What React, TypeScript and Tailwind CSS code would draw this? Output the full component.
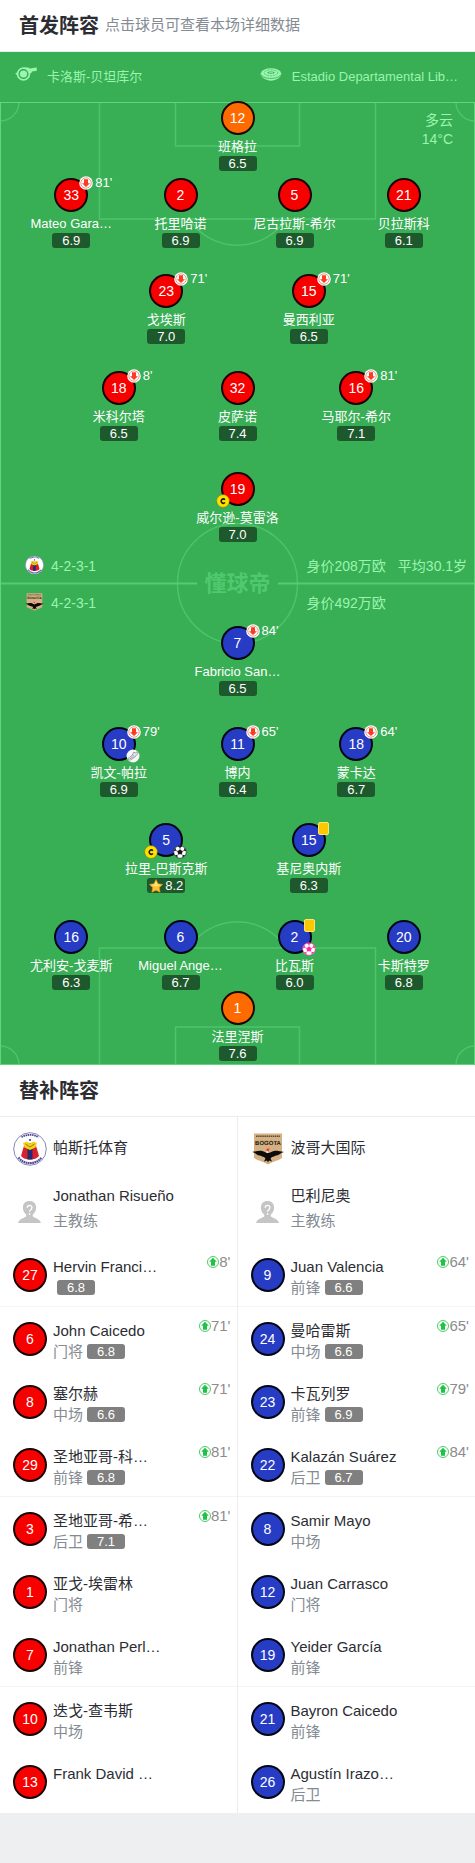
import { clsx } from "clsx";

type Badge = "captain" | "goal" | "assist" | "ownGoal" | "yellow";

interface Player {
  number: number;
  name: string;
  rating: string;
  x: number;
  y: number;
  color: "red" | "blue" | "orange";
  off?: string;
  badges?: Badge[];
  best?: boolean;
}

interface Substitute {
  number: number;
  name: string;
  position?: string;
  rating?: string;
  on?: string;
}

// x and y are percentages of the pitch
const starters: Player[] = [
  { number: 12, name: "班格拉", rating: "6.5", x: 50, y: -0.1, color: "orange" },
  { number: 33, name: "Mateo Gara…", rating: "6.9", x: 15, y: 7.9, color: "red", off: "81'" },
  { number: 2, name: "托里哈诺", rating: "6.9", x: 38, y: 7.9, color: "red" },
  { number: 5, name: "尼古拉斯-希尔", rating: "6.9", x: 62, y: 7.9, color: "red" },
  { number: 21, name: "贝拉斯科", rating: "6.1", x: 85, y: 7.9, color: "red" },
  { number: 23, name: "戈埃斯", rating: "7.0", x: 35, y: 17.9, color: "red", off: "71'" },
  { number: 15, name: "曼西利亚", rating: "6.5", x: 65, y: 17.9, color: "red", off: "71'" },
  { number: 18, name: "米科尔塔", rating: "6.5", x: 25, y: 27.9, color: "red", off: "8'" },
  { number: 32, name: "皮萨诺", rating: "7.4", x: 50, y: 27.9, color: "red" },
  { number: 16, name: "马耶尔-希尔", rating: "7.1", x: 75, y: 27.9, color: "red", off: "81'" },
  { number: 19, name: "威尔逊-莫雷洛", rating: "7.0", x: 50, y: 38.4, color: "red", badges: ["captain"] },
  { number: 7, name: "Fabricio San…", rating: "6.5", x: 50, y: 54.4, color: "blue", off: "84'" },
  { number: 10, name: "凯文-帕拉", rating: "6.9", x: 25, y: 64.9, color: "blue", off: "79'", badges: ["assist"] },
  { number: 11, name: "博内", rating: "6.4", x: 50, y: 64.9, color: "blue", off: "65'" },
  { number: 18, name: "蒙卡达", rating: "6.7", x: 75, y: 64.9, color: "blue", off: "64'" },
  { number: 5, name: "拉里-巴斯克斯", rating: "8.2", x: 35, y: 74.9, color: "blue", badges: ["captain", "goal"], best: true },
  { number: 15, name: "基尼奥内斯", rating: "6.3", x: 65, y: 74.9, color: "blue", badges: ["yellow"] },
  { number: 16, name: "尤利安-戈麦斯", rating: "6.3", x: 15, y: 84.9, color: "blue" },
  { number: 6, name: "Miguel Ange…", rating: "6.7", x: 38, y: 84.9, color: "blue" },
  { number: 2, name: "比瓦斯", rating: "6.0", x: 62, y: 84.9, color: "blue", badges: ["yellow", "ownGoal"] },
  { number: 20, name: "卡斯特罗", rating: "6.8", x: 85, y: 84.9, color: "blue" },
  { number: 1, name: "法里涅斯", rating: "7.6", x: 50, y: 92.3, color: "orange" },
];

const homeSubs: Substitute[] = [
  { number: 27, name: "Hervin Franci…", rating: "6.8", on: "8'" },
  { number: 6, name: "John Caicedo", position: "门将", rating: "6.8", on: "71'" },
  { number: 8, name: "塞尔赫", position: "中场", rating: "6.6", on: "71'" },
  { number: 29, name: "圣地亚哥-科…", position: "前锋", rating: "6.8", on: "81'" },
  { number: 3, name: "圣地亚哥-希…", position: "后卫", rating: "7.1", on: "81'" },
  { number: 1, name: "亚戈-埃雷林", position: "门将" },
  { number: 7, name: "Jonathan Perl…", position: "前锋" },
  { number: 10, name: "迭戈-查韦斯", position: "中场" },
  { number: 13, name: "Frank David …" },
];

const awaySubs: Substitute[] = [
  { number: 9, name: "Juan Valencia", position: "前锋", rating: "6.6", on: "64'" },
  { number: 24, name: "曼哈雷斯", position: "中场", rating: "6.6", on: "65'" },
  { number: 23, name: "卡瓦列罗", position: "前锋", rating: "6.9", on: "79'" },
  { number: 22, name: "Kalazán Suárez", position: "后卫", rating: "6.7", on: "84'" },
  { number: 8, name: "Samir Mayo", position: "中场" },
  { number: 12, name: "Juan Carrasco", position: "门将" },
  { number: 19, name: "Yeider García", position: "前锋" },
  { number: 21, name: "Bayron Caicedo", position: "前锋" },
  { number: 26, name: "Agustín Irazo…", position: "后卫" },
];

const shirtColors = {
  red: "bg-[#f70000]",
  blue: "bg-[#263cc4]",
  orange: "bg-[#ff6a00]",
};

function WhistleIcon() {
  return (
    <svg viewBox="0 0 22 14" className="mb-[6px] h-[14px] w-[22px] shrink-0" fill="none">
      <path d="M9 .6h4.500l1 1L21.800.4v3.400l-4.800.6-.8 1.800-2.600.6L11 3Z" fill="#9af5ae" />
      <circle cx="8.500" cy="7" r="5.900" stroke="#9af5ae" strokeWidth="1.700" />
      <circle cx="8.500" cy="7" r="4.200" stroke="#38ae55" strokeWidth="1.200" />
      <circle cx="8.500" cy="7" r="3.600" fill="#9af5ae" />
      <path d="M.2 6.800 3.200 4.600v4.400Z" fill="#9af5ae" />
    </svg>
  );
}

function StadiumIcon() {
  return (
    <svg viewBox="0 0 22 13" className="mb-[6px] h-[13px] w-[22px] shrink-0" fill="none">
      <path d="M.3 5.600C1 9 5.500 12.800 11 12.800S21 9 21.700 5.600Z" fill="#9af5ae" />
      <ellipse cx="11" cy="5.200" rx="10" ry="5" fill="#9af5ae" />
      <path d="M1 6.400c1.500 3 5.500 4 10 4s8.500-1 10-4" stroke="#38ae55" strokeWidth=".8" />
      <ellipse cx="11" cy="4.800" rx="6.800" ry="3" stroke="#38ae55" strokeWidth=".6" strokeDasharray="2.500 .8" />
      <ellipse cx="11" cy="4.600" rx="3.600" ry="1.200" fill="#38ae55" />
      <path d="M9 4.600h4" stroke="#9af5ae" strokeWidth=".8" />
    </svg>
  );
}

function HomeCrest({ className }: { className: string }) {
  return (
    <svg viewBox="0 0 34 34" className={className}>
      <circle cx="17" cy="17" r="16.300" fill="#fff" stroke="#8a86b8" strokeWidth="1" />
      <path d="M8.500 5.300C13.500 2 20.500 2 25.500 5.300" fill="none" stroke="#4b4794" strokeWidth="1.800" strokeDasharray="1.600 .6" />
      <path d="M5.500 25.500c5.500 7.500 17.500 7.500 23 0" fill="none" stroke="#4b4794" strokeWidth="2.200" strokeDasharray="1.700 .5" />
      <circle cx="17" cy="8" r="1.100" fill="#3a3a90" />
      <path d="M12 11h10l2 6 2 7c-2 2.500-5 3.500-9 3.500S10 26.500 8 24l2-7Z" fill="#d8202c" />
      <path d="M14.500 16h5v11.400a20 20 0 0 1-5 0Z" fill="#252a72" />
      <path d="m10 11 4-1.500 3 2 3-2 4 1.500-1.500 4.500L17 18l-5.500-2.500Z" fill="#f5d21c" />
      <path d="m12.500 12 4.500 3 4.500-3" fill="none" stroke="#7d6415" strokeWidth=".8" />
    </svg>
  );
}

function AwayCrest({ className }: { className: string }) {
  return (
    <svg viewBox="0 0 34 34" className={className}>
      <path d="M3 1.500h28V26c-3.500 2.500-9 3.500-14 6.500C12 29.500 6.500 28.500 3 26Z" fill="#d4b083" />
      <path d="M5 4.200h24" stroke="#5b4a35" strokeWidth="1.500" strokeDasharray="1.500 .6" />
      <text x="17" y="12.500" textAnchor="middle" fontSize="6" fontWeight="700" textRendering="geometricPrecision" fill="#231b14">
        BOGOTA
      </text>
      <path d="M1 20c4-.5 7-1.500 10-1 2.500.5 4 2 6 2s3.500-1.500 6-2c3-.5 6 .5 10 1-3.500.8-5 3.200-7.500 3.500-1.800.3-2.500 1.500-4.500 1.500l-1.500 1.500 1.500 3-3-1-1 2-1-2-3 1 1.500-3L13 25c-2 0-2.700-1.200-4.500-1.500C6 23.200 4.500 20.800 1 20Z" fill="#0d0b0a" />
      <path d="m15.800 16.500 3 .3-1 1.200-.3 2-2-.5Z" fill="#e8343e" />
      <path d="m15.500 19 2 .5-.6 1.500-1.500-.6Z" fill="#fff" />
    </svg>
  );
}

function CoachAvatar() {
  return (
    <svg viewBox="0 0 34 34" className="h-[34px] w-[34px] shrink-0">
      <path d="M16.500 6c4 0 6.600 2.700 6.600 6.500 0 3.200-1.400 5.600-3.400 7.200v1.500c2 2 7.400 2.600 8.300 6.800H5c.9-4.200 6.300-4.800 8.300-6.800v-1.500c-2-1.600-3.400-4-3.400-7.200C9.900 8.700 12.500 6 16.500 6Z" fill="#c5c5c5" />
      <path d="M14.200 12.800c0-3.200 4.800-3.200 4.800-.2 0 2-2.400 2.200-2.400 4.200" fill="none" stroke="#fff" strokeWidth="1.300" />
      <circle cx="16.600" cy="18.900" r=".9" fill="#fff" />
    </svg>
  );
}

function SwapIcon({ direction }: { direction: "up" | "down" }) {
  if (direction === "up") {
    return (
      <svg viewBox="0 0 12 12" className="h-3 w-3">
        <circle cx="6" cy="6" r="5.500" fill="#fff" stroke="#4fcb6b" strokeWidth="1" />
        <path d="m6 1.800 3.800 4H8v3.900H4V5.800H2.200Z" fill="#1ec244" />
      </svg>
    );
  }
  return (
    <svg viewBox="0 0 14 14" className="h-[14px] w-[14px]">
      <circle cx="7" cy="7" r="6.800" fill="#fff" />
      <circle cx="7" cy="7" r="5.200" fill="#fff" stroke="#f08a7c" strokeWidth=".9" />
      <path d="M7 11 3 7.300h2V3.200h4v4.100h2Z" fill="#fb3c22" />
    </svg>
  );
}

function BallIcon({ color }: { color: string }) {
  return (
    <svg viewBox="0 0 14 14" className="h-[14px] w-[14px]">
      <circle cx="7" cy="7" r="6.300" fill="#fff" stroke={color} strokeWidth=".6" />
      <g fill={color}>
        <path d="m7 4.400 2.700 1.800-1 3H5.300l-1-3Z" />
        <path d="M4.500 1.100h5L7 3ZM.7 6.200l1.500-3.400L3.300 5.500ZM13.300 6.200l-1.500-3.400-1.100 2.700ZM1.800 10.200l2.400-.3.600 3ZM12.200 10.200l-2.400-.3-.6 3Z" />
      </g>
      <path d="M7 4.600V2.500M9.400 6.300l1.800-1M8.500 9.100l1.500 1.500M5.500 9.100 4 10.600M4.600 6.300l-1.800-1" stroke={color} strokeWidth=".6" />
    </svg>
  );
}

function AssistIcon() {
  return (
    <svg viewBox="0 0 14 14" className="h-[14px] w-[14px]">
      <circle cx="7" cy="7" r="6.500" fill="#f5f7f8" />
      <path d="M2 9.500 6.500 6l1-2.800 2 .6 1.500-1 .8 1.500-2.500 3.400L4.500 11 2.300 11Z" fill="#e2e6ea" stroke="#70757d" strokeWidth=".6" />
      <path d="m4 9.800 3-2M6.500 6l1.800 1.500" stroke="#70757d" strokeWidth=".6" />
    </svg>
  );
}

function CaptainIcon() {
  return (
    <svg viewBox="0 0 14 14" className="h-[14px] w-[14px]">
      <circle cx="7" cy="7" r="6.400" fill="#ffe100" stroke="#7a6a10" strokeWidth=".5" />
      <path d="M9 5.700A2.200 2.100 0 1 0 9 8.500" fill="none" stroke="#1d1a08" strokeWidth="1.500" />
    </svg>
  );
}

function StarIcon() {
  return (
    <svg viewBox="0 0 14 14" className="h-[14px] w-[14px]">
      <path d="m7 .6 2 4.200 4.600.6-3.300 3.200.8 4.700L7 11.200l-4.100 2.100.8-4.700L.4 5.400 5 4.800Z" fill="#ffc12e" stroke="#f59a12" strokeWidth=".6" />
      <path d="m7 2 1.300 3.300 3.700.6-5 1.600-5-1.600 3.700-.6Z" fill="#ffe28a" />
    </svg>
  );
}

function PlayerBadge({ badge }: { badge: Badge }) {
  switch (badge) {
    case "captain":
      return (
        <span className="absolute top-[22px] -left-[5px]">
          <CaptainIcon />
        </span>
      );
    case "yellow":
      return <span className="absolute -top-px -right-[3px] h-[13px] w-[11px] rounded-xs border border-[#ffe27a] bg-[#fdc800]" />;
    case "assist":
      return (
        <span className="absolute top-[22px] -right-1">
          <AssistIcon />
        </span>
      );
    default:
      return (
        <span className="absolute top-[22px] -right-1">
          <BallIcon color={badge === "goal" ? "#15151c" : "#ff2aa0"} />
        </span>
      );
  }
}

function ShirtNumber({ number, color }: { number: number; color: Player["color"] }) {
  return (
    <span
      className={clsx(
        "flex h-[34px] w-[34px] shrink-0 items-center justify-center rounded-full border-2 border-black/90 text-sm text-white",
        shirtColors[color],
      )}
    >
      {number}
    </span>
  );
}

function PitchPlayer({ player }: { player: Player }) {
  const { number, name, rating, x, y, color, off, badges = [], best } = player;

  return (
    <button
      type="button"
      className="absolute flex w-[90px] -translate-x-1/2 flex-col items-center text-white"
      style={{ left: `${x}%`, top: `${y}%` }}
    >
      <span className="relative">
        <ShirtNumber number={number} color={color} />
        {off && (
          <span className="absolute -top-[2px] left-[25px] flex items-center gap-[2px] text-[13px] leading-[14px]">
            <SwapIcon direction="down" />
            {off}
          </span>
        )}
        {badges.map((badge) => (
          <PlayerBadge key={badge} badge={badge} />
        ))}
      </span>
      <span className="mt-[3px] text-[13px] leading-[18px] whitespace-nowrap">{name}</span>
      <span className="flex h-[15px] w-[38px] items-center justify-center gap-[2px] rounded-[3px] bg-[#1d592c] text-[13px] leading-[15px]">
        {best && <StarIcon />}
        {rating}
      </span>
    </button>
  );
}

function PitchMarkings() {
  return (
    <svg viewBox="0 0 475 963" className="absolute inset-0 h-full w-full" fill="none" stroke="#4dc36b" strokeWidth="1.500">
      <path d="M99.500 0v117h276V0M175.500 0v44h124V0M189 117a58 58 0 0 0 97 0" />
      <path d="M99.500 963V846h276v117M175.500 963v-38h124v38M189 846a58 58 0 0 1 97 0" />
      <path d="M19 0A19 19 0 0 1 0 19M456 0a19 19 0 0 0 19 19M0 944a19 19 0 0 1 19 19M475 944a19 19 0 0 0-19 19" />
      <circle cx="237.500" cy="481.500" r="60" />
      <path d="M0 481.500h197M278 481.500h197" stroke="#55cb75" strokeWidth="2" />
      <rect x=".5" y=".5" width="474" height="962" stroke="#5fd67e" strokeWidth="1" />
    </svg>
  );
}

function SubstituteRow({ player, color }: { player: Substitute; color: Player["color"] }) {
  return (
    <li className="relative box-content flex h-[63px] items-center gap-[6px] border-[#f3f4f5] pl-[13px] nth-[3n+1]:border-b">
      <ShirtNumber number={player.number} color={color} />
      <div className="pt-1 leading-[21px]">
        <p className="text-[#2b2d33]">{player.name}</p>
        <div className="flex h-[21px] items-center text-[#848b93]">
          {player.position}
          {player.rating && (
            <span className="ml-1 h-[15px] w-[38px] rounded-[3px] bg-[#808080] text-center text-[13px] leading-[15px] text-white">
              {player.rating}
            </span>
          )}
        </div>
      </div>
      {player.on && (
        <span className="absolute top-[10px] right-[6px] flex items-center leading-[18px] text-[#8c8c8c]">
          <SwapIcon direction="up" />
          {player.on}
        </span>
      )}
    </li>
  );
}

interface TeamColumnProps {
  crest: React.ReactNode;
  team: string;
  coach: string;
  color: Player["color"];
  players: Substitute[];
}

function TeamColumn({ crest, team, coach, color, players }: TeamColumnProps) {
  return (
    <div className="min-w-0 text-[15px]">
      <div className="flex h-[63px] items-center gap-[6px] pl-[13px] text-[#2b2d33]">
        {crest}
        {team}
      </div>
      <div className="flex h-[63px] items-center gap-[6px] pl-[13px]">
        <CoachAvatar />
        <div className="pb-2 leading-[25px]">
          <p className="text-[#2b2d33]">{coach}</p>
          <p className="text-[#848b93]">主教练</p>
        </div>
      </div>
      <ul>
        {players.map((player) => (
          <SubstituteRow key={player.number} player={player} color={color} />
        ))}
      </ul>
    </div>
  );
}

export default function App() {
  return (
    <main className="bg-[#eeeff1] pb-[50px] font-['Liberation_Sans','Noto_Sans_CJK_SC',sans-serif]">
      <header className="flex h-[52px] items-center gap-[6px] border-b border-[#ececec] bg-white pl-[19px]">
        <h1 className="text-xl font-bold text-[#2b2d33]">首发阵容</h1>
        <span className="text-[15px] text-[#848b93]">点击球员可查看本场详细数据</span>
      </header>

      <section className="bg-[#38ae55] text-[#9af5ae]">
        <div className="flex h-[50px] items-center justify-between pr-[17px] pl-[15px] text-[13px]">
          <div className="flex items-center gap-[10px]">
            <WhistleIcon />
            卡洛斯-贝坦库尔
          </div>
          <div className="flex items-center gap-[10px]">
            <StadiumIcon />
            Estadio Departamental Lib…
          </div>
        </div>

        <div className="relative aspect-[475/963] text-sm">
          <PitchMarkings />
          <div className="absolute top-[9px] right-[22px] text-right leading-[19px]">
            <p>多云</p>
            <p>14°C</p>
          </div>

          <div className="absolute inset-x-0 top-1/2 grid -translate-y-1/2 grid-cols-[minmax(0,1fr)_auto_minmax(0,1fr)] items-center">
            <div className="flex flex-col gap-[17px] pl-[25px] leading-5">
              <p className="flex items-center gap-[7px]">
                <HomeCrest className="h-[19px] w-[19px]" />
                4-2-3-1
              </p>
              <p className="flex items-center gap-[7px]">
                <AwayCrest className="h-[19px] w-[19px]" />
                4-2-3-1
              </p>
            </div>
            <span className="text-[22px] font-bold text-[#4fc96e]">懂球帝</span>
            <div className="flex flex-col gap-[17px] pl-9 leading-5 whitespace-nowrap">
              <p className="flex gap-3">
                <span>身价208万欧</span>
                <span>平均30.1岁</span>
              </p>
              <p>身价492万欧</p>
            </div>
          </div>

          {starters.map((player) => (
            <PitchPlayer key={`${player.color}-${player.number}-${player.x}`} player={player} />
          ))}
        </div>
      </section>

      <section className="bg-white">
        <h2 className="flex h-[52px] items-center border-b border-[#ececec] pl-[19px] text-xl font-bold text-[#2b2d33]">
          替补阵容
        </h2>
        <div className="grid grid-cols-2 divide-x divide-[#ececec]">
          <TeamColumn
            crest={<HomeCrest className="h-[34px] w-[34px]" />}
            team="帕斯托体育"
            coach="Jonathan Risueño"
            color="red"
            players={homeSubs}
          />
          <TeamColumn
            crest={<AwayCrest className="h-[34px] w-[34px]" />}
            team="波哥大国际"
            coach="巴利尼奥"
            color="blue"
            players={awaySubs}
          />
        </div>
      </section>
    </main>
  );
}
